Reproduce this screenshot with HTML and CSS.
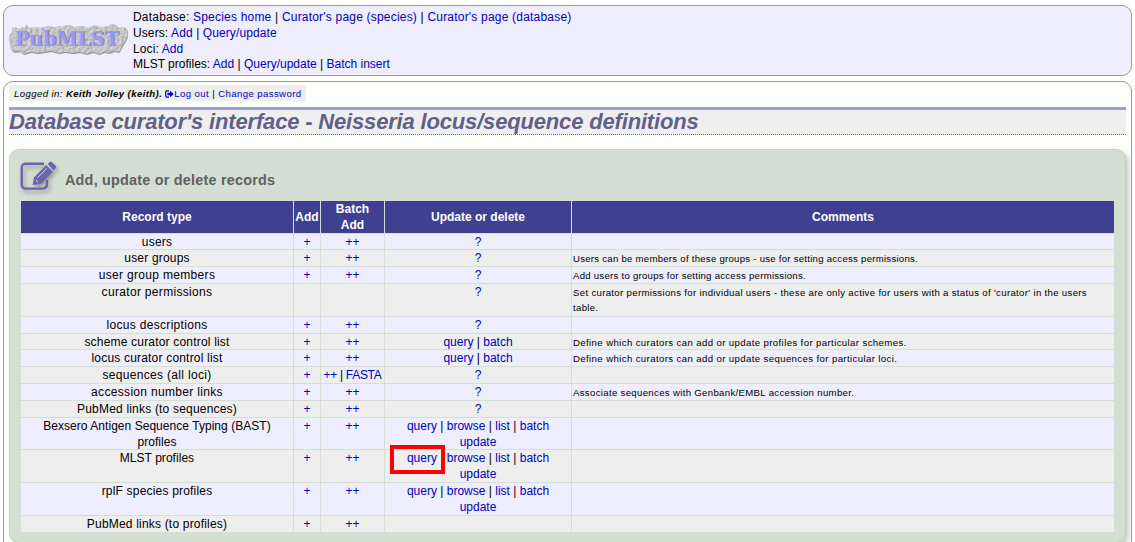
FILE: index.html
```
<!DOCTYPE html>
<html lang="en">
<head>
<meta charset="utf-8">
<title>Database curator's interface</title>
<link rel="stylesheet" href="styles.css">
</head>
<body>
<header class="banner">
  <svg class="logo" width="120" height="34" viewBox="0 0 120 34">
    <defs>
      <filter id="stone" x="-5%" y="-10%" width="110%" height="125%" color-interpolation-filters="sRGB">
        <feTurbulence type="fractalNoise" baseFrequency="0.35" numOctaves="3" seed="4" result="n"/>
        <feDiffuseLighting in="n" surfaceScale="0.7" lighting-color="#e0e0e0" result="l"><feDistantLight azimuth="225" elevation="62"/></feDiffuseLighting>
        <feComposite in="l" in2="SourceGraphic" operator="in" result="t"/>
        <feDropShadow in="t" dx="0.5" dy="0.8" stdDeviation="0.5" flood-color="#777"/>
      </filter>
    </defs>
    <path filter="url(#stone)" fill="#c8c8c8" d="M3 5L6 4L9 6L13 4L16 5L17 1L20 5L28 4L32 5L39 3L45 4L54 3L60 2L65 4L73 3L79 5L85 2L91 4L99 3L103 1L107 2L109 5L115 4L118 7L118 14L115 20L112 25L110 29L105 28L100 30L95 29L90 31L84 29L77 31L71 29L64 30L56 29L49 30L42 28L36 29L29 30L21 29L15 31L11 28L5 29L2 26L1 20L0 13L3 9Z"/>
    <text class="logo-shade" x="6.7" y="23.2" textLength="104" lengthAdjust="spacingAndGlyphs">PubMLST</text>
    <text class="logo-text" x="6" y="22.5" textLength="104" lengthAdjust="spacingAndGlyphs">PubMLST</text>
  </svg>
  <nav class="nav">
    <div class="n1">Database: <a>Species home</a> | <a>Curator's page (species)</a> | <a>Curator's page (database)</a></div>
    <div class="n2">Users: <a>Add</a> | <a>Query/update</a></div>
    <div class="n3">Loci: <a>Add</a></div>
    <div class="n4">MLST profiles: <a>Add</a> | <a>Query/update</a> | <a>Batch insert</a></div>
  </nav>
</header>
<main class="page">
  <div class="login"><i>Logged in: <b>Keith Jolley (keith).</b></i>
    <svg class="out" width="9" height="8" viewBox="0 0 9 8"><path d="M4 .9H1.7Q.7.9.7 2V6Q.7 7.1 1.7 7.1H4" fill="none" stroke="#00b" stroke-width="1.2"/><path d="M2.4 2.7H5V.8L8.8 4L5 7.2V5.3H2.4Z" fill="#00b"/></svg><a>Log out</a> | <a>Change password</a></div>
  <h1 class="title"><span>Database curator's interface - Neisseria locus/sequence definitions</span></h1>
  <section class="box">
    <div class="boxhead">
      <svg class="edit" width="42" height="38" viewBox="0 0 42 38">
        <path fill="none" stroke="#6866b3" stroke-width="2.4" d="M25 3.7H7Q2.7 3.7 2.7 8V24Q2.7 28.6 7 28.6H23Q28 28.6 28 24V20"/>
        <path fill="#6866b3" d="M27.2 5.1L33.8 11.9L21.6 24L13.6 25L14.9 17.4ZM28.6 3.9L30.6 2Q31.8 1 33 2.2L36.6 5.8Q37.7 7 36.5 8.2L34.8 10.2Z"/>
        <path fill="none" stroke="#d4dfd4" stroke-width="1" d="M18.3 17.8L27.8 8.6M16.6 20.1L19 22.2"/>
      </svg>
      <h2>Add, update or delete records</h2>
    </div>
    <table class="records">
      <thead><tr class="head"><th>Record type</th><th>Add</th><th>Batch<br>Add</th><th>Update or delete</th><th>Comments</th></tr></thead>
      <tbody>
      <tr class="h16"><td>users</td><td><a>+</a></td><td><a>++</a></td><td><a>?</a></td><td></td></tr>
      <tr><td>user groups</td><td><a>+</a></td><td><a>++</a></td><td><a>?</a></td><td class="c1">Users can be members of these groups - use for setting access permissions.</td></tr>
      <tr><td class="wide">user group members</td><td><a>+</a></td><td><a>++</a></td><td><a>?</a></td><td class="c1">Add users to groups for setting access permissions.</td></tr>
      <tr class="h33"><td class="wide">curator permissions</td><td></td><td></td><td><a>?</a></td><td class="c2">Set curator permissions for individual users - these are only active for users with a status of 'curator' in the users<br>table.</td></tr>
      <tr><td class="wide">locus descriptions</td><td><a>+</a></td><td><a>++</a></td><td><a>?</a></td><td></td></tr>
      <tr class="h16"><td>scheme curator control list</td><td><a>+</a></td><td><a>++</a></td><td><a>query</a> | <a>batch</a></td><td class="c3">Define which curators can add or update profiles for particular schemes.</td></tr>
      <tr><td>locus curator control list</td><td><a>+</a></td><td><a>++</a></td><td><a>query</a> | <a>batch</a></td><td class="c3">Define which curators can add or update sequences for particular loci.</td></tr>
      <tr><td class="wide">sequences (all loci)</td><td><a>+</a></td><td class="tight"><a>++</a> | <a>FASTA</a></td><td><a>?</a></td><td></td></tr>
      <tr><td class="wide">accession number links</td><td><a>+</a></td><td><a>++</a></td><td><a>?</a></td><td class="c2">Associate sequences with Genbank/EMBL accession number.</td></tr>
      <tr><td>PubMed links (to sequences)</td><td><a>+</a></td><td><a>++</a></td><td><a>?</a></td><td></td></tr>
      <tr class="h32"><td class="natural">Bexsero Antigen Sequence Typing (BAST)<br>profiles</td><td><a>+</a></td><td><a>++</a></td><td><a>query</a> | <a>browse</a> | <a>list</a> | <a>batch<br>update</a></td><td></td></tr>
      <tr class="h33"><td class="natural">MLST profiles</td><td><a>+</a></td><td><a>++</a></td><td class="marked"><a>query</a> | <a>browse</a> | <a>list</a> | <a>batch<br>update</a></td><td></td></tr>
      <tr class="h33"><td>rplF species profiles</td><td><a>+</a></td><td><a>++</a></td><td><a>query</a> | <a>browse</a> | <a>list</a> | <a>batch<br>update</a></td><td></td></tr>
      <tr><td>PubMed links (to profiles)</td><td><a>+</a></td><td><a>++</a></td><td></td><td></td></tr>
      </tbody>
    </table>
  </section>
</main>
</body>
</html>
```
FILE: styles.css
```
*, *::before { box-sizing: border-box; }
html { overflow: hidden; }
body { margin: 0; padding: 5px 3px 0; height: 542px; overflow: hidden; background: #fff; color: #000; font: 12px/16px "Liberation Sans", Arial, sans-serif; }
a { color: #00b; }
.banner { display: flex; height: 71px; border: 1px solid #999; border-radius: 10px; background: #eef; width: 1129px; }
.logo { flex: none; margin: 17px 0 0 5px; }
.logo-text, .logo-shade { font: bold 20.5px "DejaVu Serif", serif; fill: #9999ff; }
.logo-shade { fill: #77778c; }
.nav { margin: 3px 0 0 4px; white-space: nowrap; }
.n1 { letter-spacing: .2px; }
.n2, .n3 { letter-spacing: .1px; }
.n4 { margin-top: -1px; }
.page { width: 1129px; height: 480px; margin-top: 5px; padding: 3px 5px 0; border: 1px solid #999; border-radius: 10px; background: #fdfffa; }
.login { width: 297px; height: 16px; padding-left: 5px; background: #eeeeec; font-size: 9.6px; line-height: 17px; letter-spacing: .4px; white-space: nowrap; }
.out { vertical-align: -1px; }
.title { width: 1117px; height: 28px; margin: 6px 0 14px; border-top: 3px solid #a0a0d0; border-bottom: 1px dotted #6666aa; background: #efefef; color: #606088; font: italic bold 22px/23px "Liberation Sans", Arial, sans-serif; letter-spacing: -.17px; white-space: nowrap; }
.box { width: 1117px; height: 394px; padding: 0 11px; border: 1px solid #ccc; border-radius: 10px; background: #d4dfd4; box-shadow: 3px 3px 5px #ccc; }
.boxhead { display: flex; height: 51px; padding-top: 10px; }
.edit { flex: none; margin-left: -2px; filter: drop-shadow(2px 3px 2px #999); }
h2 { margin: 12px 0 0 4px; color: #606060; font-size: 14.4px; line-height: 16px; letter-spacing: .22px; white-space: nowrap; }
.records, thead, tbody { display: block; width: 1093px; }
tr { display: grid; grid-template-columns: 272px 27px 64px 187px 543px; height: 17px; background: #eee; }
tbody tr:nth-child(odd) { background: #eef; }
.head { height: 32px; background: #404090; color: #fff; }
.h16 { height: 16px; }
.h32 { height: 32px; }
.h33 { height: 33px; }
th, td { padding: 0; border-left: 1px solid #d4dfd4; text-align: center; white-space: nowrap; }
th:first-child, td:first-child { border-left: 0; }
.head th { line-height: 32px; }
.head th:nth-child(3) { line-height: 16px; }
td { border-top: 1px solid #d4dfd4; }
td:first-child { letter-spacing: .19px; }
td.wide:first-child { letter-spacing: .32px; }
td.natural:first-child { letter-spacing: .04px; }
.tight { letter-spacing: -.3px; }
td:last-child { padding: 1px 0 0 1px; text-align: left; font-size: 9.6px; line-height: 15px; }
.c1 { letter-spacing: .26px; }
.c2 { letter-spacing: .33px; }
.c3 { letter-spacing: .39px; }
.marked { position: relative; }
.marked::before { content: ""; position: absolute; left: 5px; top: -5px; width: 55px; height: 29px; border: 4px solid #f00; }
```
